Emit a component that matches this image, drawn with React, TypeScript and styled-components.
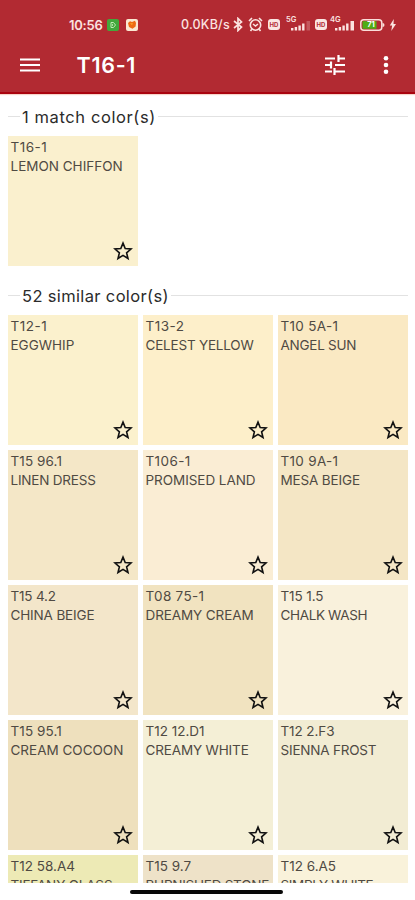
import React from "react";
import styled, { createGlobalStyle } from "styled-components";

const Global = createGlobalStyle`
  * { box-sizing: border-box; }
  body { margin: 0; background: #fff; overflow: hidden; font-family: Inter, "Noto Sans", sans-serif; }
`;

const Screen = styled.div`
  width: 415px;
  height: 900px;
  display: flex;
  flex-direction: column;
  background: #fff;
  overflow: hidden;
`;

const Header = styled.header`
  height: 94px;
  flex: none;
  background: #b22a32;
  border-bottom: 2px solid #a9040f;
  box-shadow: 0 1px 1px #f6d5cb;
  color: #fff;
`;

const StatusBar = styled.div`
  height: 38px;
  padding: 11px 10px 0 69px;
  display: flex;
  align-items: center;
  color: #fbe3e0;
`;

const Clock = styled.span`
  width: 34px;
  flex: none;
  font-size: 13px;
  font-weight: 600;
  line-height: 16px;
  letter-spacing: -0.25px;
  white-space: nowrap;
`;

const Speed = styled.span`
  width: 50px;
  flex: none;
  margin-left: 43px;
  font-size: 12.5px;
  font-weight: 500;
  line-height: 16px;
  letter-spacing: 0.2px;
  white-space: nowrap;
`;

const AppBadge = styled.span<{ $bg: string; $gap: number }>`
  width: 12px;
  height: 12px;
  flex: none;
  margin-left: ${(p) => p.$gap}px;
  border-radius: 2px;
  background: ${(p) => p.$bg};
  display: flex;
  align-items: center;
  justify-content: center;
`;

const StatusSvg = styled.svg<{ $gap?: number }>`
  flex: none;
  display: block;
  margin-left: ${(p) => p.$gap ?? 0}px;
`;

const Hd = styled.span<{ $gap: number }>`
  width: 12px;
  height: 11px;
  flex: none;
  margin-left: ${(p) => p.$gap}px;
  border-radius: 3px;
  background: #fbe6e3;
  color: #b22a32;
  font-size: 6px;
  font-weight: 700;
  line-height: 11px;
  text-align: center;
`;

const SignalBox = styled.span<{ $gap: number }>`
  position: relative;
  width: 25px;
  height: 15px;
  flex: none;
  margin-left: ${(p) => p.$gap}px;
`;

const Network = styled.span`
  position: absolute;
  left: 0;
  top: -1px;
  font-size: 7.5px;
  line-height: 8px;
  font-weight: 600;
`;

const Battery = styled.span`
  position: relative;
  display: flex;
  width: 25px;
  height: 12px;
  flex: none;
  margin-left: 5px;
`;

const Level = styled.span`
  position: absolute;
  left: 2px;
  width: 18px;
  top: 0;
  font-size: 7.5px;
  line-height: 12px;
  font-weight: 700;
  text-align: center;
  color: #fff;
`;

const Toolbar = styled.div`
  height: 54px;
  padding: 0 26px 0 20px;
  display: flex;
  align-items: center;
`;

const Title = styled.h1`
  flex: 1;
  margin: 0 0 0 36.5px;
  font-size: 21.5px;
  line-height: 28px;
  font-weight: 600;
  letter-spacing: 0.7px;
`;

const Content = styled.main`
  height: 789px;
  flex: none;
  padding: 10.5px 7px 0 8px;
  overflow: hidden;
`;

const Section = styled.section`
  margin-bottom: 18px;
`;

const Legend = styled.div`
  height: 24px;
  margin-bottom: 7px;
  display: flex;
  align-items: center;
  gap: 2px;
  color: #2b2b2b;

  &::before, &::after {
    content: "";
    height: 1px;
    background: #e2e2e2;
  }
  &::before { width: 12px; }
  &::after { flex: 1; }
`;

const LegendText = styled.h2<{ $spacing: number }>`
  margin: 0;
  font-size: 16.5px;
  font-weight: 400;
  line-height: 24px;
  letter-spacing: ${(p) => p.$spacing}px;
  white-space: nowrap;
`;

const Grid = styled.div`
  display: grid;
  grid-template-columns: repeat(3, 130px);
  grid-auto-rows: 130px;
  gap: 5px;
`;

const Tile = styled.article<{ $color: string }>`
  padding: 2px 3px 8px 2.5px;
  display: flex;
  flex-direction: column;
  background: ${(p) => p.$color};
  color: #4f4a43;
  font-size: 13.5px;
  line-height: 19px;
`;

const Line = styled.span<{ $spacing: number }>`
  letter-spacing: ${(p) => p.$spacing}px;
  white-space: nowrap;
`;

const Star = styled.svg`
  display: block;
  margin: auto 2px -3px auto;
`;

const HomeBar = styled.div`
  width: 153px;
  height: 4px;
  margin: 7px auto 0 130px;
  border-radius: 2px;
  background: #080808;
`;

type Swatch = { code: string; name: string; color: string; cs?: number; ns?: number };

const match: Swatch[] = [{ code: "T16-1", name: "LEMON CHIFFON", color: "#faf0ce", cs: 0.5 }];

const similar: Swatch[] = [
  { code: "T12-1", name: "EGGWHIP", color: "#fbf1cd", cs: 0.5 },
  { code: "T13-2", name: "CELEST YELLOW", color: "#fdefca", cs: 0.5, ns: -0.2 },
  { code: "T10 5A-1", name: "ANGEL SUN", color: "#fae9c3", cs: 0.3, ns: -0.25 },
  { code: "T15 96.1", name: "LINEN DRESS", color: "#f4e7c7", cs: 0.1, ns: -0.2 },
  { code: "T106-1", name: "PROMISED LAND", color: "#faedd4", cs: 0.4, ns: -0.05 },
  { code: "T10 9A-1", name: "MESA BEIGE", color: "#f4e6c5", cs: 0.3, ns: -0.15 },
  { code: "T15 4.2", name: "CHINA BEIGE", color: "#f3e6ca", cs: -0.2, ns: -0.15 },
  { code: "T08 75-1", name: "DREAMY CREAM", color: "#f1e3c0", cs: 0.3, ns: -0.1 },
  { code: "T15 1.5", name: "CHALK WASH", color: "#f9f1dc", cs: -0.1, ns: -0.35 },
  { code: "T15 95.1", name: "CREAM COCOON", color: "#eee0bd", cs: 0.1 },
  { code: "T12 12.D1", name: "CREAMY WHITE", color: "#f4efd6", ns: -0.15 },
  { code: "T12 2.F3", name: "SIENNA FROST", color: "#f2ecd3", cs: -0.1, ns: -0.2 },
  { code: "T12 58.A4", name: "TIFFANY GLASS", color: "#edeab5", ns: -0.15 },
  { code: "T15 9.7", name: "BURNISHED STONE", color: "#eee2c8", ns: -0.25 },
  { code: "T12 6.A5", name: "SIMPLY WHITE", color: "#f9f2da", ns: -0.35 },
];

function SwatchTile({ code, name, color, cs = 0, ns = 0 }: Swatch) {
  return (
    <Tile $color={color}>
      <Line $spacing={cs}>{code}</Line>
      <Line $spacing={ns}>{name}</Line>
      <Star width="20" height="20" viewBox="0 0 20 20" fill="none" stroke="#111" strokeWidth="1.6">
        <path d="M10 2.1 12.2 7.5 18 8 13.6 11.8 15 17.5 10 14.4 5 17.5 6.4 11.8 2 8 7.8 7.5Z" />
      </Star>
    </Tile>
  );
}

function Signal({ label, gap, weak }: { label: string; gap: number; weak?: boolean }) {
  return (
    <SignalBox $gap={gap}>
      <Network>{label}</Network>
      <StatusSvg width="25" height="15" viewBox="0 0 25 15" fill="#fbe3e0">
        <path d="M5 11h2.4v2.5H5zM8.7 10h2.4v3.5H8.7zM12.4 8.5h2.4v5h-2.4zM16.1 6.5h2.4v7h-2.4z" />
        <path d="M20.5 4H24v9.5h-3.5z" opacity={weak ? 0.25 : 1} />
      </StatusSvg>
    </SignalBox>
  );
}

export default function App() {
  return (
    <Screen>
      <Global />
      <Header>
        <StatusBar>
          <Clock>10:56</Clock>
          <AppBadge $bg="#43a83b" $gap={4}>
            <svg width="8" height="8" viewBox="0 0 8 8" fill="none" stroke="#bfe9b4">
              <path d="M2 1.5h2.5L6.5 4 4.5 6.5H2zM3.5 3.2v1.6" />
            </svg>
          </AppBadge>
          <AppBadge $bg="#fbe9d2" $gap={7}>
            <svg width="10" height="10" viewBox="0 0 10 10">
              <path d="M1 3 3 1.2 5 2 8 .8 9 3 8.6 6.5 5.5 8.7 2 7Z" fill="#ee6b13" />
              <path d="M3 3.2h3l-1 2z" fill="#f8a52a" />
            </svg>
          </AppBadge>
          <Speed>0.0KB/s</Speed>
          <StatusSvg width="10" height="15" viewBox="0 0 10 15" fill="none" stroke="currentColor" strokeWidth="1.7" $gap={2}>
            <path d="m1 4 7.5 6L5 13.5v-12L8.5 5 1 11" />
          </StatusSvg>
          <StatusSvg width="15" height="15" viewBox="0 0 15 15" fill="none" stroke="currentColor" strokeWidth="1.6" $gap={5}>
            <circle cx="7.5" cy="8" r="5.2" />
            <path d="M1 4 4 1M11 1l3 3M5 7l2.5 2L10 7M3.8 12.2 2.5 14M11.2 12.2l1.3 1.8" />
          </StatusSvg>
          <Hd $gap={5}>HD</Hd>
          <Signal label="5G" gap={6} weak />
          <Hd $gap={4}>HD</Hd>
          <Signal label="4G" gap={3} />
          <Battery>
            <svg width="25" height="12" viewBox="0 0 25 12">
              <rect x="2.5" y="2.2" width="14" height="7.6" fill="#4fad16" />
              <rect x=".8" y=".8" width="21" height="10.4" rx="3" fill="none" stroke="#fbdeda" strokeWidth="1.5" />
              <path d="M22.5 4q2 0 2 2t-2 2z" fill="#fbdeda" />
            </svg>
            <Level>71</Level>
          </Battery>
          <StatusSvg width="8" height="12" viewBox="0 0 8 12" fill="currentColor" $gap={4}>
            <path d="M4.8 0 .8 6.4h2.3L2.3 12 7 5H4.5z" />
          </StatusSvg>
        </StatusBar>
        <Toolbar>
          <svg width="20" height="14" viewBox="0 0 20 14" fill="#fff">
            <path d="M0 .5h20v2H0zM0 6h20v2H0zM0 11.5h20v2H0z" />
          </svg>
          <Title>T16-1</Title>
          <svg width="20" height="20" viewBox="0 0 20 20" fill="none" stroke="#fff" strokeWidth="2.2">
            <path d="M0 3.5h10M13.5 0v7M14 3.5h6M0 10h7M6 6.5v7M10 10h10M0 16.5h7M9.5 13v7M10 16.5h10" />
          </svg>
          <StatusSvg width="6" height="20" viewBox="0 0 6 20" fill="#fff" $gap={38}>
            <circle cx="3" cy="3.2" r="2.3" />
            <circle cx="3" cy="10" r="2.3" />
            <circle cx="3" cy="16.8" r="2.3" />
          </StatusSvg>
        </Toolbar>
      </Header>
      <Content>
        <Section>
          <Legend>
            <LegendText $spacing={0.6}>1 match color(s)</LegendText>
          </Legend>
          <Grid>{match.map((s) => <SwatchTile key={s.code} {...s} />)}</Grid>
        </Section>
        <Section>
          <Legend>
            <LegendText $spacing={0.35}>52 similar color(s)</LegendText>
          </Legend>
          <Grid>{similar.map((s) => <SwatchTile key={s.code} {...s} />)}</Grid>
        </Section>
      </Content>
      <HomeBar />
    </Screen>
  );
}
